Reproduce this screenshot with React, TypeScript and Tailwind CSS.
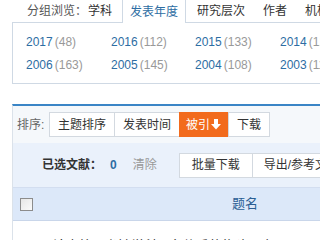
import React from 'react';

const years = [
  [
    ['2017', '48'],
    ['2016', '112'],
    ['2015', '133'],
    ['2014', '127'],
  ],
  [
    ['2006', '163'],
    ['2005', '145'],
    ['2004', '108'],
    ['2003', '116'],
  ],
];

function DownArrow() {
  return (
    <svg width="10" height="11" viewBox="0 0 10 11" className="ml-[1px]">
      <rect x="3" y="0" width="4" height="6" fill="#fff" />
      <polygon points="0,5 10,5 5,10.5" fill="#fff" />
    </svg>
  );
}

export default function App() {
  return (
    <div
      className="w-[320px] h-[240px] overflow-hidden bg-white text-[12px] text-[#333]"
      style={{ fontFamily: '"Liberation Sans", "Noto Sans CJK SC", sans-serif' }}
    >
      {/* Group tabs */}
      <div className="ml-[12px] flex h-[23px] whitespace-nowrap">
        <div className="shrink-0 w-[75px] pl-[15px] border-b border-[#cfd9e4] flex items-center text-[#555]">分组浏览：</div>
        <div className="shrink-0 w-[35px] pl-[1px] border-b border-[#cfd9e4] flex items-center">学科</div>
        <div className="shrink-0 w-[64px] pl-[7px] border-l border-r border-[#cfd9e4] flex items-center text-[#2d6da3]">发表年度</div>
        <div className="shrink-0 pl-[11px] pr-[9px] border-b border-[#cfd9e4] flex items-center">研究层次</div>
        <div className="shrink-0 px-[9px] border-b border-[#cfd9e4] flex items-center">作者</div>
        <div className="shrink-0 w-[60px] px-[9px] border-b border-[#cfd9e4] flex items-center">机构</div>
      </div>

      {/* Year panel */}
      <div className="ml-[12px] h-[61px] border-l border-b border-[#cfd9e4] pl-[13px] pt-[7px]">
        {years.map((row, i) => (
          <div key={i} className="grid grid-cols-[85px_84px_85px_85px] h-[23px] items-center whitespace-nowrap">
            {row.map(([y, n]) => (
              <div key={y}>
                <span className="text-[#2d6da3]">{y}</span>
                <span className="ml-[2px] text-[#999]">({n})</span>
              </div>
            ))}
          </div>
        ))}
      </div>

      {/* Results */}
      <div className="ml-[12px] mt-[20px] border-t-2 border-[#3a85c6] border-l border-l-[#dbe2ea]">
        <div className="h-[37px] bg-[#f5f8fb] flex items-center pl-[4px] whitespace-nowrap">
          <span className="text-[#666] w-[32px]">排序:</span>
          <div className="flex">
            <div className="h-[25px] px-[8px] flex items-center border border-[#d3d9e0] bg-white">主题排序</div>
            <div className="h-[25px] px-[8px] -ml-px flex items-center border border-[#d3d9e0] bg-white">发表时间</div>
            <div className="h-[25px] w-[49px] -ml-px flex items-center justify-center bg-[#f26b1d] text-white">
              被引
              <DownArrow />
            </div>
            <div className="h-[25px] px-[8px] flex items-center border border-[#d3d9e0] bg-white">下载</div>
          </div>
        </div>

        <div className="h-[45px] bg-[#eaf1fb] border-b border-[#d3def0] flex items-center whitespace-nowrap">
          <span className="ml-[29px] font-bold text-[#333]">已选文献：</span>
          <span className="ml-[8px] font-bold text-[#2d6da3]">0</span>
          <span className="ml-[16px] text-[#999]">清除</span>
          <div className="ml-[22px] flex">
            <div className="h-[25px] px-[12px] flex items-center border border-[#d3d9e0] bg-white">批量下载</div>
            <div className="h-[25px] px-[11px] -ml-px flex items-center border border-[#d3d9e0] bg-white">导出/参考文献</div>
          </div>
        </div>

        <div className="h-[33px] bg-[#dce8f9] border-b border-[#c9d6ea] flex items-center">
          <div className="ml-[7px] w-[13px] h-[13px] border border-[#8c8c8c] bg-gradient-to-br from-[#e6e6e6] to-[#fafafa]" />
          <div className="ml-[199px] text-[13px] text-[#2a5e93]">题名</div>
        </div>

        <div className="h-[40px] pt-[15px] pl-[40px] whitespace-nowrap text-[13px] text-[#222]">
          论高校图书馆学科服务体系的构建研究
        </div>
      </div>
    </div>
  );
}
